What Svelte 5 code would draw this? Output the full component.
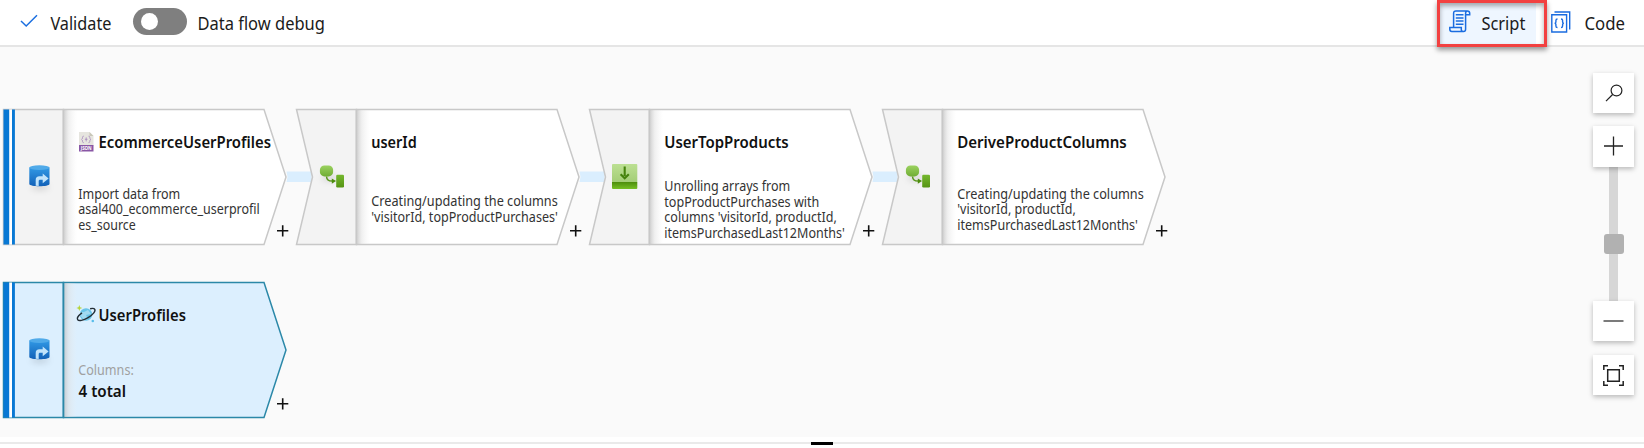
<script>
  const nodes = [
    { x: 3, y: 109, source: true, icon: 'import', badge: 'json', title: ['EcommerceUserProfiles', 172.5],
      top: 89.5, lines: [['Import data from', 102], ['asal400_ecommerce_userprofil', 181.5], ['es_source', 57.5]] },
    { x: 296, y: 109, icon: 'derive', title: ['userId', 45.5], link: true,
      top: 97.4, lines: [['Creating/updating the columns', 186.5], ["'visitorId, topProductPurchases'", 186.5]] },
    { x: 589, y: 109, icon: 'flatten', title: ['UserTopProducts', 124.5], link: true,
      top: 81.7, lines: [['Unrolling arrays from', 126], ['topProductPurchases with', 155], ["columns 'visitorId, productId,", 172.5], ["itemsPurchasedLast12Months'", 180.5]] },
    { x: 882, y: 109, icon: 'derive', title: ['DeriveProductColumns', 169.5], link: true,
      top: 89.5, lines: [['Creating/updating the columns', 186.5], ["'visitorId, productId,", 118.5], ["itemsPurchasedLast12Months'", 180.5]] },
    { x: 3, y: 281.7, source: true, selected: true, icon: 'import', badge: 'cosmos', title: ['UserProfiles', 87.5], columns: true, lines: [] }
  ];
</script>

{#snippet label(text, width)}
  <svg class="label" width={width} height="28"><text x="-.6" y="20.500" textLength={width + 0.5} lengthAdjust="spacingAndGlyphs">{text}</text></svg>
{/snippet}

<div class="app">
  <header>
    <button class="validate">
      <svg width="18" height="14" viewBox="0 0 18 14"><path d="M1 7l5.2 5L17 1.2" fill="none" stroke="#1b6fe0" stroke-width="1.5" /></svg>
      {@render label('Validate', 60.5)}
    </button>
    <span class="toggle"><i></i></span>
    {@render label('Data flow debug', 127)}
    <div class="right">
      <button class="script">
        <svg width="22" height="23" viewBox="0 0 22 23" fill="none" stroke="#1a6ce0" stroke-width="1.5">
          <path d="M4.600 17.500V3.400C4.600 1.800 5.400.9 7 .9h11.300c1.600 0 2.400 1 2.400 2.300v1.500h-4.100V3.200C16.600 1.800 17.300.9 18.300.9" />
          <path d="M16.600 4.700v14.500c0 1.500-.8 2.300-2.100 2.300H2.800C1.500 21.500.8 20.600.8 19.300v-1.700h11.500v1.900c0 1.200.8 2 2 2" />
          <path d="M6.800 4.700h7.700M6.800 7.900h7.700M6.800 11.100h7.700M6.800 14.300h7.700" />
        </svg>
        {@render label('Script', 43.5)}
      </button>
      <button class="code">
        <svg width="20" height="22" viewBox="0 0 20 22" fill="none" stroke="#1a6ce0" stroke-width="1.4">
          <path d="M3.500 1h15.200v17.500" /><path d="M.8 3.800h14.800v17.200H.8z" />
          <path d="M6.500 8c-1.300 0-1.600.5-1.600 1.500v1.400c0 .8-.4 1.300-1.300 1.300.9 0 1.300.5 1.300 1.300v1.400c0 1 .3 1.600 1.600 1.600M10 8c1.300 0 1.600.5 1.600 1.500v1.400c0 .8.4 1.300 1.300 1.300-.9 0-1.300.5-1.300 1.300v1.400c0 1-.3 1.600-1.600 1.600" />
        </svg>
        {@render label('Code', 40)}
      </button>
    </div>
    <div class="highlight"></div>
  </header>

  <main>
    <svg class="defs" width="0" height="0">
      <defs>
        <linearGradient id="shade"><stop offset="0" stop-color="#bbb" stop-opacity=".65" /><stop offset=".35" stop-color="#ddd" stop-opacity=".45" /><stop offset="1" stop-color="#eee" stop-opacity="0" /></linearGradient>
        <linearGradient id="blue" x2="0" y2="1"><stop stop-color="#3199e5" /><stop offset="1" stop-color="#1261b8" /></linearGradient>
        <linearGradient id="lime" x2="0" y2="1"><stop stop-color="#9bd260" /><stop offset="1" stop-color="#70ad35" /></linearGradient>
        <linearGradient id="leaf" x2="0" y2="1"><stop stop-color="#74b72e" /><stop offset="1" stop-color="#569414" /></linearGradient>
        <linearGradient id="pale" x2="0" y2="1"><stop stop-color="#bce092" /><stop offset="1" stop-color="#a3cd76" /></linearGradient>
        <linearGradient id="base" x2="0" y2="1"><stop stop-color="#4c8d0c" /><stop offset="1" stop-color="#76c024" /></linearGradient>
      </defs>
    </svg>
    {#each nodes as n}
      <svg class="node" class:selected={n.selected} style="left:{n.x}px;top:{n.y - 47}px" width="290" height="137">
        {#if n.link}<path class="link" d="M-9.500 62.500H15.500V73H-9.500L-8.500 68z" />{/if}
        <path class="side" d={n.source ? 'M.5.500H60.500V135.500H.5z' : 'M.5.500H60.500V135.500H.5L16.500 68z'} />
        <path class="body" d="M60.500.500H261L283 68L261 135.500H60.500z" />
        <rect x="61.200" y="1" width="13" height="134" fill="url(#shade)" />
        <path class="edge" d="M60.500.500V135.500" />
        {#if n.source}
          <path fill="#fff" d="M6 .500h3v135h-3z" />
          <path fill="#0878d4" d="M.5.500h5.700v135H.5zM9 .500h2.900v135H9z" />
        {/if}

        {#if n.icon === 'import'}
          <g transform="translate(26 56)">
            <ellipse class="blur" cx="11" cy="22" rx="9" ry="3" />
            <path fill="url(#blue)" d="M.3 2.500h20.200v16.500c0 3-20.200 3-20.200 0z" /><ellipse cx="10.400" cy="2.600" rx="10.100" ry="2.300" fill="#50aae9" />
            <path fill="#c0e3fb" d="M6.700 20.800V15c0-2.600 1.300-3.700 3.700-3.700h3.300V8.600l5.900 4.900-5.900 4.700v-3.400h-2.500c-1.100 0-1.500.5-1.500 1.500v4.600z" />
          </g>
        {:else if n.icon === 'derive'}
          <g transform="translate(23.500 56)">
            <ellipse class="blur" cx="10" cy="13" rx="8" ry="3" />
            <rect x=".4" y=".4" width="13.200" height="11" rx="4.500" fill="url(#lime)" />
            <path d="M7 11.500c.2 3 2.200 4.600 5.500 4.600h1" fill="none" stroke="#5a981b" stroke-width="1.500" />
            <path d="M12.300 13.400l4.300 2.700-4.300 2.700z" fill="#4d8c0e" />
            <rect x="16.700" y="9.800" width="7.800" height="12.800" rx="1.300" fill="url(#leaf)" />
          </g>
        {:else}
          <g transform="translate(23 55)">
            <rect width="25.300" height="18.500" rx="1" fill="url(#pale)" /><path fill="url(#base)" d="M0 18h25.300v6q0 1-1 1H1q-1 0-1-1z" />
            <path d="M12.700 2.500v9.500M8.600 10.200l4.100 4.100 4.100-4.100" fill="none" stroke="#45820c" stroke-width="2.100" />
          </g>
        {/if}

        {#if n.badge === 'json'}
          <g transform="translate(76 23)">
            <path fill="#e6e5df" d="M0 0h10.500l4 4v10H0z" /><path fill="#c8c7b8" d="M10.500 0v4h4z" />
            <path d="M4.800 4.200c-1 0-1.300.4-1.300 1.300 0 1-.2 1.600-.9 1.900.7.3.9.9.9 1.900s.3 1.300 1.300 1.300M9.500 4.200c1 0 1.300.4 1.300 1.300 0 1 .2 1.600.9 1.900-.7.3-.9.9-.9 1.900s-.3 1.300-1.300 1.300M7.200 5.400v4M5.900 7.300h2.600" fill="none" stroke="#a485bd" stroke-width=".8" />
            <path fill="#8957a5" d="M0 13h14.500v6.500H0z" /><text class="json" x="1.700" y="18.200" textLength="11" lengthAdjust="spacingAndGlyphs">JSON</text>
          </g>
        {:else if n.badge === 'cosmos'}
          <g transform="translate(74 24)">
            <circle cx="9" cy="8.500" r="6.200" fill="#68c4e8" /><path d="M4 6c3 1 4-1 7-2l3 4-5 1 2 4-4 1-4-5z" fill="#a0daf1" />
            <ellipse cx="9.200" cy="8.500" rx="10" ry="3.700" transform="rotate(-31 9.200 8.500)" fill="none" stroke="#222d35" stroke-width="1.400" stroke-dasharray="31 9 40" />
            <path d="M2.300-1l.8 2.200 2.200.8-2.200.8L2.300 5l-.8-2.200L-.7 2l2.200-.8z" fill="#b5d334" /><circle cx="15.800" cy="15" r="1.300" fill="#58bdea" />
          </g>
        {/if}

        <text class="title" x={n.badge ? 95.500 : 75.200} y="39" textLength={n.title[1]} lengthAdjust="spacingAndGlyphs">{n.title[0]}</text>
        {#each n.lines as [text, width], i}
          <text class="desc" x="75.300" y={n.top + i * 15.8} textLength={width} lengthAdjust="spacingAndGlyphs">{text}</text>
        {/each}
        {#if n.columns}
          <text class="desc muted" x="75.300" y="93" textLength="55.500" lengthAdjust="spacingAndGlyphs">Columns:</text>
          <text class="title" x="75.500" y="114.700" textLength="47.500" lengthAdjust="spacingAndGlyphs">4 total</text>
        {/if}
        <path d="M274 121.800h11.300M279.700 116.200v11.300" stroke="#111" stroke-width="1.600" />
      </svg>
    {/each}

    <div class="controls">
      <button><svg width="18" height="18" viewBox="0 0 18 18" fill="none" stroke="#222" stroke-width="1.200"><circle cx="11.500" cy="6.500" r="5.400" /><path d="M7.600 10.500L1 17.200" /></svg></button>
      <div class="zoom">
        <button><svg width="20" height="20" viewBox="0 0 20 20"><path d="M0 10h19M9.500 .5v19" stroke="#222" stroke-width="1.300" /></svg></button>
        <div class="track"><i></i></div>
        <button><svg width="21" height="20" viewBox="0 0 21 20"><path d="M.5 10h20" stroke="#333" stroke-width="1.300" /></svg></button>
      </div>
      <button><svg width="21" height="21" viewBox="0 0 21 21" fill="none" stroke="#222" stroke-width="1.500"><path d="M4.700 4.700h11.600v11.600H4.700z" /><path d="M.8 5V.8H5M16 .8h4.200V5M20.200 16v4.200H16M5 20.200H.8V16" /></svg></button>
    </div>
  </main>
  <footer><i></i></footer>
</div>

<style>
  :global(body) { margin: 0; background: #fff; }
  .app { width: 1644px; height: 448px; overflow: hidden; display: flex; flex-direction: column; font-family: "Noto Sans", "Open Sans", sans-serif; }
  button { border: 0; padding: 0; margin: 0; background: none; display: flex; align-items: center; font: inherit; }
  header { position: relative; z-index: 2; box-sizing: border-box; height: 47px; flex: none; display: flex; align-items: flex-start; padding-left: 20px; border-bottom: 2px solid #e5e5e5; background: #fff; }
  .label { display: block; margin-top: 9px; overflow: visible; font-size: 17.500px; fill: #1b1b1b; }
  .validate { gap: 12.500px; align-items: flex-start; }
  .validate > svg:first-child { margin-top: 14px; }
  .toggle { width: 54px; height: 27px; margin: 8px 10.500px 0 22px; box-sizing: border-box; border-radius: 14px; background: #7f7f7f; padding: 5px 8px; }
  .toggle i { display: block; width: 17px; height: 17px; border-radius: 50%; background: #fff; }
  .right { margin-left: auto; width: 204px; display: flex; }
  .script { width: 96px; height: 44px; padding-left: 9px; gap: 11px; background: #eef6ff; align-items: flex-start; box-sizing: border-box; }
  .script > svg:first-child { margin-top: 10px; }
  .code { gap: 14px; margin-left: 15px; align-items: flex-start; }
  .code > svg:first-child { margin-top: 11px; }
  .highlight { position: absolute; left: 1437px; top: 0; width: 104px; height: 41px; border: 3px solid #f24141; box-shadow: 0 3px 5px #0006, inset 0 3px 5px #0005; }
  main { position: relative; height: 390px; flex: none; background: #fafafa; }
  .defs { position: absolute; }
  .node { position: absolute; overflow: visible; }
  .side { fill: #f3f3f3; stroke: #c8c8c8; stroke-width: 1.500; }
  .body { fill: #fff; stroke: #c8c8c8; stroke-width: 1.500; }
  .edge { stroke: #c8c8c8; stroke-width: 1.500; }
  .selected .side, .selected .body { fill: #dceffe; stroke: #2b88a8; }
  .selected .edge { stroke: #2b88a8; }
  .link { fill: #daeefe; }
  .blur { fill: #0002; filter: blur(3px); }
  .title { font-size: 15.800px; font-weight: 600; fill: #111; }
  .desc { font-size: 13.600px; fill: #333; }
  .muted { fill: #a0a0a0; }
  .json { font-size: 5px; font-weight: 700; fill: #fff; }
  .controls { position: absolute; left: 1593px; top: 25.500px; width: 41px; display: flex; flex-direction: column; gap: 13.500px; }
  .controls button { width: 41px; height: 40.300px; justify-content: center; background: #fff; box-shadow: 0 2px 5px #0004; position: relative; }
  .zoom { display: flex; flex-direction: column; align-items: center; }
  .track { width: 9px; height: 134.500px; background: #d6d6d6; display: flex; align-items: center; justify-content: center; }
  .track i { width: 20px; height: 20px; flex: none; border-radius: 3px; background: #b1b1b1; margin-top: 20px; }
  footer { box-sizing: border-box; height: 11px; padding-top: 5px; background: linear-gradient(#fff 5px, #eaeaea 5px, #eaeaea 7.500px, #fff 7.500px); display: flex; justify-content: center; }
  footer i { width: 22px; height: 3px; background: #000; }
</style>
